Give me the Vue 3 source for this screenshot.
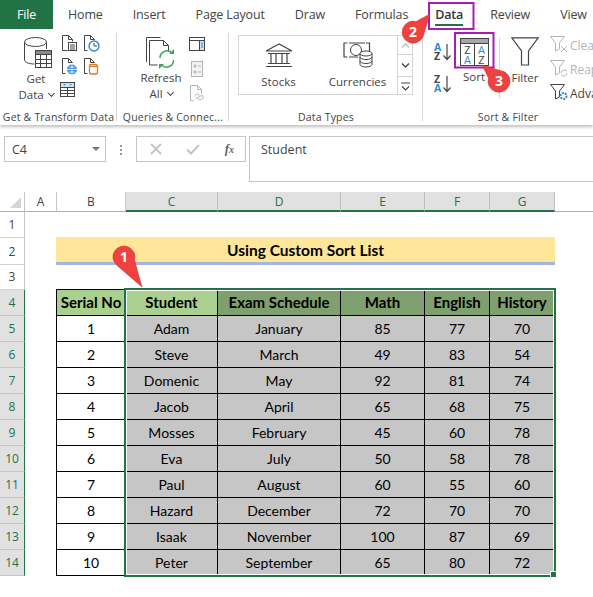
<template>
  <div class="app">
    <nav class="tabs">
      <div class="tab file">File</div>
      <div v-for="t in tabs" :key="t" class="tab" :class="{ on: t === 'Data' }">{{ t }}</div>
    </nav>

    <section class="ribbon">
      <div class="group g1">
        <div class="body">
          <div class="big get">
            <svg width="28" height="31" viewBox="0 0 28 31" fill="none" stroke="#444">
              <path d="M.5 5v18c0 2 4 4 10 4M22.5 5v7" />
              <ellipse cx="11.5" cy="5" rx="11" ry="4.5" fill="#fff" />
              <rect x="11.5" y="13.5" width="16" height="17" fill="#fff" />
              <rect x="11.5" y="13.5" width="16" height="4" fill="#8a8a8a" />
              <path d="M16.5 17.5v13M22.5 17.5v13M11.5 22.5h16M11.5 26.5h16" />
            </svg>
            <span>Get</span>
            <span>Data <i class="chev"></i></span>
          </div>
          <div class="smalls">
            <svg width="16" height="17" viewBox="0 0 16 17" fill="none" stroke="#444">
              <path d="M.5 15.5V.5h6l4 4M6.5.5v4h4v2M.5 15.5h5" />
              <rect x="6.5" y="7.5" width="8" height="8" fill="#fff" />
              <path d="M8 10h5M8 12h5M8 14h5" />
            </svg>
            <svg width="16" height="17" viewBox="0 0 16 17" fill="none" stroke="#444">
              <path d="M.5 15.5V.5h6l4 4M6.5.5v4h4M.5 15.5h3" />
              <circle cx="10" cy="11" r="5" fill="#fff" stroke="#2e8bd6" stroke-width="1.4" />
              <path d="M10 8v3h3" />
            </svg>
            <svg width="16" height="17" viewBox="0 0 16 17" fill="none" stroke="#444">
              <path d="M.5 15.5V.5h6l4 4M6.5.5v4h4M.5 15.5h3" />
              <circle cx="10" cy="11.5" r="5" fill="#2e8bd6" stroke="none" />
              <path d="M5 11.5h10M10 6.5v10M6.5 9h7M6.5 14h7" stroke="#fff" stroke-width=".8" />
            </svg>
            <svg width="16" height="17" viewBox="0 0 16 17" fill="none" stroke="#444">
              <path d="M.5 15.5V.5h6l4 4M6.5.5v4h4M.5 15.5h3" />
              <rect x="5.5" y="6.5" width="8" height="9.5" rx="2" fill="#fff" stroke="#d87a1e" stroke-width="1.3" />
              <path d="M5.5 8.5h8" stroke="#d87a1e" />
            </svg>
            <svg class="third" width="16" height="16" viewBox="0 0 16 16" fill="none" stroke="#444">
              <rect x=".5" y=".5" width="14" height="14" />
              <rect x="1" y="1" width="13" height="4" fill="#cfe3f5" stroke="none" />
              <path d="M3 2l1.500 1.500L6 2zM9 2l1.500 1.500L12 2z" fill="#2e8bd6" stroke="none" />
              <path d="M.5 5.500h14M.5 8.500h14M.5 11.500h14M7.500 5.500v9" />
            </svg>
          </div>
        </div>
        <div class="label">Get &amp; Transform Data</div>
      </div>

      <div class="group g2">
        <div class="body">
          <div class="big refresh">
            <svg width="30" height="32" viewBox="0 0 30 32" fill="none" stroke="#444">
              <path d="M.5 25V.5h14M3.500 28V3.500h14l5 5v6M3.500 28h8M17.500 3.500v5h5" />
              <path d="M14 21a7 7 0 0 1 12-5M27.500 23a7 7 0 0 1-12 5" stroke="#3fa45b" stroke-width="1.500" />
              <path d="M28 12v5h-5zM13 32v-5h5z" fill="#3fa45b" stroke="none" />
            </svg>
            <span>Refresh</span>
            <span>All <i class="chev"></i></span>
          </div>
          <div class="smalls one">
            <svg width="16" height="15" viewBox="0 0 16 15" fill="none" stroke="#444">
              <rect x=".5" y=".5" width="15" height="13" />
              <rect x="10" y="4" width="5" height="9" fill="#cfe3f5" stroke="none" />
              <path d="M.5 3.500h15M10.500 3.500v10" />
              <path d="M12 6h2M12 8h2M12 10h2" stroke="#2e8bd6" />
            </svg>
            <svg width="12" height="16" viewBox="0 0 12 16" fill="#f3f3f3" stroke="#b5b5b5">
              <rect x=".5" y=".5" width="11" height="15" />
              <path d="M3 4h2v2H3zM3 10h2v2H3zM7 5h3M7 11h3" />
            </svg>
            <svg width="14" height="16" viewBox="0 0 14 16" fill="none" stroke="#b5b5b5">
              <path d="M.5 15.500V.5h7l4 4v4M7.500.5v4h4M.5 15.500h3" />
              <path d="M5 11c1-3 4-3 4 0s-3 3-3 1M8 13c1 3 5 2 5-1s-3-2-3 0" />
            </svg>
          </div>
        </div>
        <div class="label">Queries &amp; Connec...</div>
      </div>

      <div class="group g3">
        <div class="body">
          <div class="gallery">
            <div class="type stocks">
              <svg width="28" height="25" viewBox="0 0 28 25" fill="none" stroke="#444" stroke-width="1.200">
                <path d="M14 1L1 8h26zM3 10.500h22M6 11v9M11 11v9M17 11v9M22 11v9M3 20.500h22M1 23.500h26" />
              </svg>
              <span>Stocks</span>
            </div>
            <div class="type currencies">
              <svg width="30" height="26" viewBox="0 0 30 26" fill="none" stroke="#444">
                <path d="M4.500 1H1v14h3.500M23 1h3.500v8M15 15H6M6 1h16" stroke-width="1.200" />
                <circle cx="13" cy="8" r="5.500" />
                <ellipse cx="23" cy="11.500" rx="6" ry="2.500" fill="#fff" />
                <path d="M17 11.500v11c0 1.500 3 2.500 6 2.500s6-1 6-2.500v-11M17 15c0 1.500 3 2.500 6 2.500s6-1 6-2.500M17 19c0 1.500 3 2.500 6 2.500s6-1 6-2.500" />
              </svg>
              <span>Currencies</span>
            </div>
            <div class="scroller">
              <div class="off">
                <svg width="9" height="5" viewBox="0 0 9 5" fill="none" stroke="#bbb" stroke-width="1.300"><path d="M1 4.500l3.500-3.500 3.500 3.500" /></svg>
              </div>
              <div>
                <svg width="9" height="5" viewBox="0 0 9 5" fill="none" stroke="#444" stroke-width="1.300"><path d="M1 .5l3.500 3.500 3.500-3.500" /></svg>
              </div>
              <div>
                <svg width="9" height="9" viewBox="0 0 9 9" fill="none" stroke="#444" stroke-width="1.200"><path d="M0 1h9M1 4.500l3.500 3.500 3.500-3.500" /></svg>
              </div>
            </div>
          </div>
        </div>
        <div class="label">Data Types</div>
      </div>

      <div class="group g4">
        <div class="body">
          <div class="az">
            <svg width="18" height="18" viewBox="0 0 18 18" fill="none" overflow="visible">
              <text x="0" y="8" class="az-l blue">A</text>
              <text x="0" y="17" class="az-l dark">Z</text>
              <path d="M13 1v15M9.500 12.500l3.500 4 3.500-4" stroke="#444" stroke-width="1.200" />
            </svg>
            <svg width="18" height="18" viewBox="0 0 18 18" fill="none" overflow="visible">
              <text x="0" y="8" class="az-l dark">Z</text>
              <text x="0" y="17" class="az-l blue">A</text>
              <path d="M13 1v15M9.500 12.500l3.500 4 3.500-4" stroke="#444" stroke-width="1.200" />
            </svg>
          </div>
          <div class="big sort">
            <svg width="29" height="28" viewBox="0 0 29 28" fill="none" stroke="#444" overflow="visible">
              <rect x=".5" y=".5" width="28" height="27" fill="#fff" />
              <rect x="1" y="1" width="27" height="4" fill="#a6a6a6" stroke="none" />
              <path d="M.5 5.500h28M14.500 5.500v22" />
              <text x="7.500" y="16" class="sort-l dark">Z</text>
              <text x="7.500" y="26" class="sort-l blue">A</text>
              <text x="21.500" y="16" class="sort-l blue">A</text>
              <text x="21.500" y="26" class="sort-l dark">Z</text>
            </svg>
            <span>Sort</span>
          </div>
          <div class="big filter">
            <svg width="28" height="29" viewBox="0 0 28 29" fill="none" stroke="#444" stroke-width="1.200">
              <path d="M.8.800h26.400L17.500 14v14h-7V14z" />
            </svg>
            <span>Filter</span>
          </div>
          <div class="filters">
            <div class="off">
              <svg width="20" height="18" viewBox="0 0 20 18" fill="none" stroke="#b5b5b5">
                <path d="M.5.500h14l-5 6.500v6l-4 2V7z" />
                <path d="M11 10l6 6M17 10l-6 6" />
              </svg>
              <span>Clear</span>
            </div>
            <div class="off">
              <svg width="20" height="18" viewBox="0 0 20 18" fill="none" stroke="#b5b5b5">
                <path d="M.5.500h14l-5 6.500v6l-4 2V7z" />
                <path d="M11 13a3.500 3.500 0 0 1 6-2M17 13a3.500 3.500 0 0 1-6 2" />
              </svg>
              <span>Reapply</span>
            </div>
            <div>
              <svg width="20" height="18" viewBox="0 0 20 18" fill="none" stroke="#444">
                <path d="M.5.500h14l-5 6.500v6l-4 2V7z" />
                <circle cx="13.500" cy="12" r="3" stroke="#2e8bd6" stroke-width="2" stroke-dasharray="2 1" />
              </svg>
              <span>Advanced</span>
            </div>
          </div>
        </div>
        <div class="label">Sort &amp; Filter</div>
      </div>
    </section>

    <section class="formula">
      <div class="namebox">C4<i class="drop"></i></div>
      <div class="dots"><i></i><i></i><i></i></div>
      <div class="actions">
        <svg width="12" height="12" viewBox="0 0 12 12" fill="none" stroke="#c4c4c4" stroke-width="1.800"><path d="M1 1l10 10M11 1L1 11" /></svg>
        <svg width="14" height="11" viewBox="0 0 14 11" fill="none" stroke="#c4c4c4" stroke-width="2"><path d="M1 5.500l4 4L13 1" /></svg>
        <span class="fx">f<small>x</small></span>
      </div>
      <div class="input">Student</div>
    </section>

    <section class="sheet">
      <div class="row heads">
        <div class="corner"><i></i></div>
        <div
          v-for="c in columns"
          :key="c"
          class="head-cell"
          :class="{ picked: 'CDEFG'.includes(c) }"
        >{{ c }}</div>
        <div class="head-rest"></div>
      </div>

      <div v-for="n in 14" :key="n" class="row">
        <div class="num" :class="{ picked: n >= 4 }">{{ n }}</div>
        <div class="title" v-if="n === 2">Using Custom Sort List</div>
        <template v-if="n >= 4">
          <div
            v-for="(v, i) in table[n - 4]"
            :key="i"
            class="cell"
            :class="{ head: n === 4, first: i === 0, active: n === 4 && i === 1 }"
          >{{ v }}</div>
        </template>
      </div>

      <div class="selection"><i></i></div>
    </section>

    <svg class="marks" width="593" height="597" viewBox="0 0 593 597">
      <rect x="429" y="3" width="44.500" height="26" />
      <rect x="455" y="33" width="38.500" height="34.500" />
      <path class="pin" d="M134.500 260A11 11 0 1 0 117 265.500L142 287Z" />
      <path class="pin" d="M423 37A11 11 0 1 1 416 21.500L430 14Z" />
      <path class="pin" d="M505 72A11 11 0 1 1 488.500 78L482 65Z" />
      <text x="124" y="262">1</text>
      <text x="413" y="37">2</text>
      <text x="499" y="86">3</text>
    </svg>
  </div>
</template>

<script setup>
const tabs = ['Home', 'Insert', 'Page Layout', 'Draw', 'Formulas', 'Data', 'Review', 'View']
const columns = ['A', 'B', 'C', 'D', 'E', 'F', 'G']
const table = [
  ['Serial No', 'Student', 'Exam Schedule', 'Math', 'English', 'History'],
  [1, 'Adam', 'January', 85, 77, 70],
  [2, 'Steve', 'March', 49, 83, 54],
  [3, 'Domenic', 'May', 92, 81, 74],
  [4, 'Jacob', 'April', 65, 68, 75],
  [5, 'Mosses', 'February', 45, 60, 78],
  [6, 'Eva', 'July', 50, 58, 78],
  [7, 'Paul', 'August', 60, 55, 60],
  [8, 'Hazard', 'December', 72, 70, 70],
  [9, 'Isaak', 'November', 100, 87, 69],
  [10, 'Peter', 'September', 65, 80, 72],
]
</script>

<style>
html,
body {
  margin: 0;
  background: #fff;
}
</style>

<style scoped>
.app {
  position: relative;
  width: 593px;
  height: 597px;
  overflow: hidden;
  background: #fff;
  color: #444;
  font-family: "Open Sans", "Noto Sans", sans-serif;
  font-size: 12px;
}

.tabs {
  display: flex;
  height: 29px;
  align-items: stretch;
}
.tab {
  flex: none;
  display: flex;
  align-items: center;
  padding: 0 15px;
  font-size: 12.5px;
  letter-spacing: -0.15px;
  white-space: nowrap;
}
.tab.file {
  width: 53px;
  box-sizing: border-box;
  justify-content: center;
  padding: 0;
  background: #217346;
  color: #fff;
}
.tab.on {
  margin: 0 -3px;
  color: #333;
  font-weight: 600;
  position: relative;
}
.tab.on::after {
  content: "";
  position: absolute;
  left: 15px;
  right: 15px;
  bottom: 3px;
  height: 2px;
  background: #217346;
}

.ribbon {
  display: flex;
  height: 96px;
  box-shadow: 0 2px 3px rgba(0, 0, 0, 0.25);
  position: relative;
}
.group {
  position: relative;
  flex: none;
  display: flex;
  flex-direction: column;
}
.group::after {
  content: "";
  position: absolute;
  right: 0;
  top: 4px;
  bottom: 4px;
  width: 1px;
  background: #d4d4d4;
}
.g1 {
  width: 117px;
}
.g2 {
  width: 112px;
}
.g3 {
  width: 194px;
}
.g4 {
  width: 170px;
}
.g4::after {
  display: none;
}
.body {
  flex: 1;
  display: flex;
  min-height: 0;
}
.body > * {
  flex: none;
}
.label {
  height: 16px;
  line-height: 16px;
  text-align: center;
  font-size: 10.5px;
  white-space: nowrap;
  letter-spacing: 0.2px;
}

.big {
  display: flex;
  flex-direction: column;
  align-items: center;
  line-height: 16px;
  font-size: 11.5px;
  white-space: nowrap;
}
.big svg {
  flex: none;
}
.chev {
  display: inline-block;
  width: 4px;
  height: 4px;
  margin: 0 0 3px 2px;
  border-right: 1px solid #444;
  border-bottom: 1px solid #444;
  transform: rotate(45deg);
}
.get {
  width: 48px;
  margin-left: 12px;
  padding-top: 8px;
}
.get svg {
  margin: 0 0 3px 3px;
}
.smalls {
  display: grid;
  grid-template-columns: 22px 22px;
  grid-auto-rows: 23px;
  padding: 6px 0 0 2px;
}
.smalls .third {
  margin: 1px 0 0 -2px;
}
.smalls.one {
  grid-template-columns: 20px;
  grid-auto-rows: 24px;
  padding: 8px 0 0 6px;
  justify-items: center;
}
.refresh {
  width: 40px;
  margin-left: 24px;
  padding-top: 8px;
}
.refresh svg {
  margin-bottom: 1px;
}

.gallery {
  display: flex;
  width: 175px;
  height: 60px;
  margin: 6px 0 0 9px;
}
.type {
  display: flex;
  flex-direction: column;
  align-items: center;
  justify-content: flex-end;
  gap: 6px;
  padding-bottom: 5px;
  border-top: 1px solid #d4d4d4;
  border-bottom: 1px solid #d4d4d4;
  font-size: 11.5px;
}
.stocks {
  width: 80px;
  box-sizing: border-box;
  border-left: 1px solid #d4d4d4;
}
.currencies {
  width: 79px;
}
.scroller {
  display: grid;
  grid-template-rows: 18px 22px 20px;
  width: 16px;
  flex: none;
  border: 1px solid #d4d4d4;
  box-sizing: border-box;
}
.scroller div {
  display: flex;
  align-items: center;
  justify-content: center;
}
.scroller div + div {
  border-top: 1px solid #d4d4d4;
}

.az {
  display: flex;
  flex-direction: column;
  gap: 14px;
  padding: 14px 0 0 11px;
  width: 20px;
}
.az-l {
  font: 700 10.5px "Open Sans", sans-serif;
  stroke: none;
}
.az-l.blue,
.sort-l.blue {
  fill: #2e8bd6;
}
.az-l.dark,
.sort-l.dark {
  fill: #444;
}
.sort-l {
  font: 400 11px "Open Sans", sans-serif;
  stroke: none;
  text-anchor: middle;
}
.sort {
  width: 40px;
  padding-top: 9px;
}
.sort svg {
  margin-bottom: 3px;
}
.filter {
  width: 40px;
  margin-left: 11px;
  padding-top: 8px;
  position: relative;
}
.filter::before {
  content: "";
  position: absolute;
  left: -6px;
  top: 9px;
  width: 1px;
  height: 60px;
  background: #d4d4d4;
}
.filter svg {
  margin-bottom: 4px;
}
.filters {
  display: grid;
  grid-auto-rows: 24px;
  padding: 4px 0 0 5px;
  font-size: 12px;
}
.filters div {
  display: flex;
  align-items: center;
  white-space: nowrap;
}
.filters .off {
  color: #b5b5b5;
}

.formula {
  display: flex;
  align-items: flex-start;
  height: 63px;
  padding-top: 11px;
  box-sizing: border-box;
  margin-bottom: 4px;
}
.namebox {
  position: relative;
  box-sizing: border-box;
  width: 102px;
  height: 26px;
  margin-left: 4px;
  padding: 0 7px;
  border: 1px solid #c6c6c6;
  line-height: 25px;
  font-size: 12.5px;
}
.drop {
  position: absolute;
  right: 5px;
  top: 10px;
  border: 4px solid transparent;
  border-top: 4px solid #777;
}
.dots {
  display: flex;
  flex-direction: column;
  gap: 2px;
  width: 30px;
  padding-top: 9px;
  align-items: center;
}
.dots i {
  width: 2px;
  height: 2px;
  background: #999;
}
.actions {
  display: flex;
  align-items: center;
  justify-content: space-between;
  box-sizing: border-box;
  width: 110px;
  height: 26px;
  padding: 0 11px 0 13px;
  border: 1px solid #c6c6c6;
}
.fx {
  font: italic 700 13px "Liberation Serif", serif;
  color: #666;
}
.fx small {
  font-size: 10px;
}
.input {
  box-sizing: border-box;
  flex: 1;
  height: 46px;
  margin-left: 3px;
  margin-right: -2px;
  padding: 4px 11px;
  border: 1px solid #c6c6c6;
  font-size: 12.5px;
}

.sheet {
  position: relative;
}
.row {
  display: grid;
  grid-template-columns: 25px 32px 69px 92px 123px 84px 65px 65px 1fr;
  height: 26px;
}
.row.heads {
  height: 20px;
}
.corner {
  position: relative;
  border-right: 1px solid #c6c6c6;
  border-bottom: 1px solid #b0b0b0;
}
.corner i {
  position: absolute;
  left: 10px;
  top: 5px;
  width: 11px;
  height: 11px;
  background: #d4d4d4;
  clip-path: polygon(100% 0, 100% 100%, 0 100%);
}
.head-cell {
  display: flex;
  align-items: center;
  justify-content: center;
  border-right: 1px solid #c6c6c6;
  border-bottom: 1px solid #b0b0b0;
  font-size: 12px;
}
.head-cell.picked {
  background: #e1e1e1;
  color: #217346;
  border-bottom: 2px solid #217346;
  border-right-color: #bdbdbd;
}
.head-rest {
  border-bottom: 1px solid #b0b0b0;
}
.num {
  display: flex;
  align-items: center;
  justify-content: center;
  box-sizing: border-box;
  border-right: 1px solid #c6c6c6;
  border-bottom: 1px solid #d4d4d4;
  font-size: 12px;
}
.num.picked {
  background: #e1e1e1;
  color: #217346;
  border-right: 1.5px solid #217346;
  border-bottom-color: #c6c6c6;
}
.title {
  grid-column: 3 / 9;
  margin-left: -1px;
  height: 28px;
  margin-top: -1px;
  padding-top: 1px;
  box-sizing: border-box;
  display: flex;
  align-items: center;
  justify-content: center;
  background: #ffe699;
  border-bottom: 3px solid #a4b5e0;
  color: #000;
  font: 700 15.5px Lato, sans-serif;
  position: relative;
  z-index: 1;
}
.cell {
  display: flex;
  align-items: center;
  justify-content: center;
  box-sizing: border-box;
  background: #c6c6c6;
  border-right: 1px solid #000;
  border-bottom: 1px solid #000;
  color: #000;
  font: 400 14px Lato, sans-serif;
  white-space: nowrap;
}
.cell.first {
  grid-column: 3;
  background: #fff;
  box-shadow: -1px 0 #000;
}
.cell.head {
  background: #7f9f6f;
  font-weight: 700;
  font-size: 15px;
  padding-bottom: 1px;
  box-shadow: 0 -1px #000;
}
.cell.head.first,
.cell.head.active {
  background: #a9d08e;
}
.cell.head.first {
  box-shadow: -1px 0 #000, 0 -1px #000, -1px -1px #000;
}
.selection {
  position: absolute;
  left: 124px;
  top: 96px;
  width: 432px;
  height: 289px;
  box-sizing: border-box;
  border: 2px solid #217346;
  box-shadow: inset 0 0 0 1px #fff;
  pointer-events: none;
}
.selection i {
  position: absolute;
  right: -3px;
  bottom: -3px;
  width: 5px;
  height: 5px;
  background: #217346;
  border: 1px solid #fff;
}

.marks {
  position: absolute;
  left: 0;
  top: 0;
  z-index: 2;
  pointer-events: none;
}
.marks rect {
  fill: none;
  stroke: #a61cb5;
  stroke-width: 2;
}
.marks .pin {
  fill: #f04040;
  stroke: #c22c2c;
  stroke-width: 0.5;
}
.marks text {
  fill: #fff;
  font: 700 14px "Open Sans", sans-serif;
  text-anchor: middle;
}
</style>
